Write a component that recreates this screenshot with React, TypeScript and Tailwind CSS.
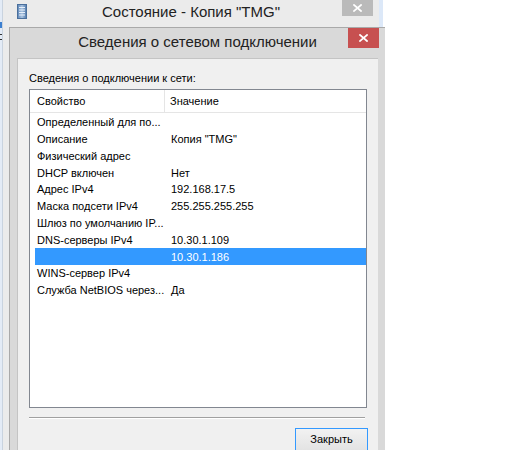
import React from "react";

const rows: [string, string][] = [
  ["Определенный для по...", ""],
  ["Описание", 'Копия "TMG"'],
  ["Физический адрес", ""],
  ["DHCP включен", "Нет"],
  ["Адрес IPv4", "192.168.17.5"],
  ["Маска подсети IPv4", "255.255.255.255"],
  ["Шлюз по умолчанию IP...", ""],
  ["DNS-серверы IPv4", "10.30.1.109"],
  ["", "10.30.1.186"],
  ["WINS-сервер IPv4", ""],
  ["Служба NetBIOS через...", "Да"],
];

const SELECTED = 8;

function CloseGlyph() {
  return (
    <svg width="9" height="8" viewBox="0 0 9 8" className="block">
      <path d="M1 1 L8 7 M8 1 L1 7" stroke="#ffffff" strokeWidth="1.7" strokeLinecap="square" />
    </svg>
  );
}

function NetIcon() {
  return (
    <svg width="10" height="15" viewBox="0 0 10 15" className="block">
      <defs>
        <linearGradient id="ng" x1="0" x2="1" y1="0" y2="0">
          <stop offset="0" stopColor="#5d86b8" />
          <stop offset="0.5" stopColor="#a9c3e0" />
          <stop offset="1" stopColor="#4f78aa" />
        </linearGradient>
      </defs>
      <rect x="0.5" y="0.5" width="9" height="14" fill="url(#ng)" stroke="#4a6f9c" />
      <path d="M2 3.5 H8 M2 6 H8 M2 8.5 H8 M2 11 H8" stroke="#e8f0fa" strokeWidth="1" />
    </svg>
  );
}

export default function App() {
  return (
    <div
      className="relative w-[509px] h-[450px] overflow-hidden bg-white text-black"
      style={{ fontFamily: '"Liberation Sans", Arial, sans-serif' }}
    >
      {/* desktop sliver on the left */}
      <div className="absolute left-0 top-0 w-[2px] h-full bg-[#e3ebf6]">
        <div className="mt-[22px] h-[6px] bg-[#3c7fd0]" />
        <div className="mt-[6px] h-[1px] bg-[#333]" />
        <div className="mt-[4px] h-[1px] bg-[#333]" />
      </div>

      {/* outer window */}
      <div className="absolute left-[2px] top-0 w-[377px] h-full bg-[#ebebeb] border-l border-[#c9d3df]">
        <div className="relative h-[27px] flex items-center justify-center">
          <div className="absolute left-[14px] top-[4px]">
            <NetIcon />
          </div>
          <span className="text-[15px] text-[#222] -mt-[3px]">Состояние - Копия "TMG"</span>
          <div className="absolute left-[339px] top-0 w-[31px] h-[16px] bg-[#bababa] flex items-center justify-center">
            <CloseGlyph />
          </div>
        </div>
      </div>
      <div className="absolute left-[379px] top-0 w-[4px] h-[27px] bg-[#dce8f8]" />

      {/* inner dialog */}
      <div className="absolute left-[9px] top-[27px] w-[376px] h-[430px] bg-[#d9d9d9] border-l border-t border-[#a9a9a9] flex flex-col">
        <div className="relative h-[30px] flex items-center justify-center">
          <span className="text-[15px] text-[#222] -mt-[1px]">Сведения о сетевом подключении</span>
          <div className="absolute left-[338px] top-0 w-[31px] h-[20px] bg-[#c75050] flex items-center justify-center">
            <CloseGlyph />
          </div>
        </div>
        <div className="ml-[7px] mr-[7px] flex-1 bg-[#f0f0f0] border-l border-t border-[#c4c4c4] px-[11px] pt-[12px] flex flex-col">
          <div className="text-[11px] leading-[15px] text-black">Сведения о подключении к сети:</div>
          <div className="mt-[3px] w-[338px] h-[319px] bg-white border border-[#828790] flex flex-col">
            <div className="h-[23px] flex border-b border-[#e5e5e5] text-[11px] text-black">
              <div className="w-[135px] pl-[7px] flex items-center border-r border-[#e5e5e5]">Свойство</div>
              <div className="flex-1 pl-[5px] flex items-center">Значение</div>
            </div>
            <div className="pt-[1px] pl-[5px]">
              {rows.map(([k, v], i) => (
                <div
                  key={i}
                  className={
                    "h-[16.8px] flex items-center text-[11px] " +
                    (i === SELECTED ? "bg-[#3399ff] text-white" : "text-black")
                  }
                >
                  <div className="w-[130px] pl-[2px] whitespace-nowrap">{k}</div>
                  <div className="flex-1 pl-[6px] whitespace-nowrap">{v}</div>
                </div>
              ))}
            </div>
          </div>
          <div className="mt-[9px] w-[336px] h-[2px] border-t border-[#a0a0a0] border-b border-b-white" />
          <div className="mt-[9px] flex justify-end w-[339px]">
            <div className="w-[73px] h-[23px] border border-[#3399ff] bg-gradient-to-b from-[#f2f2f2] to-[#e3e3e3] flex items-center justify-center text-[11px] text-black">
              Закрыть
            </div>
          </div>
        </div>
      </div>
    </div>
  );
}
